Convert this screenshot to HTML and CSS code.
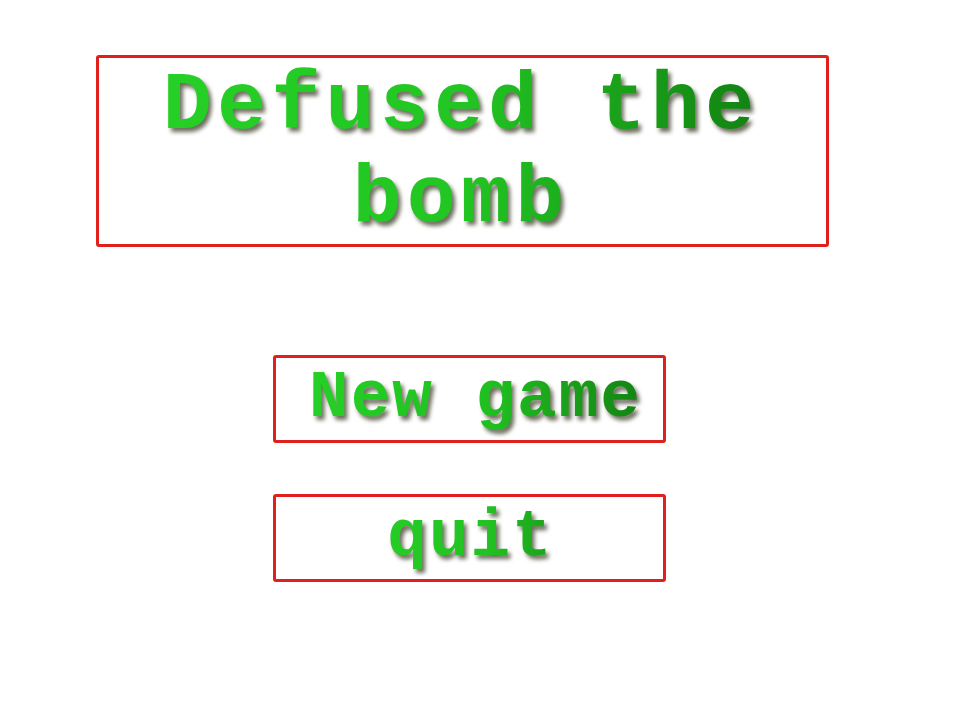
FILE: index.html
```html
<!DOCTYPE html>
<html>
<head>
<meta charset="utf-8">
<link rel="stylesheet" href="styles.css">
</head>
<body>
<div class="screen">
  <div class="title-box">
    <h1 class="title">Defused the<br>bomb</h1>
  </div>
  <div class="menu">
    <div class="btn"><span class="label label-new">New game</span></div>
    <div class="btn"><span class="label label-quit">quit</span></div>
  </div>
</div>
</body>
</html>
```
FILE: styles.css
```css
html, body {
  margin: 0;
  padding: 0;
  background: #ffffff;
}
.screen {
  width: 953px;
  height: 721px;
  padding: 55px 0 0 96px;
  box-sizing: border-box;
  font-family: "Liberation Mono", "Courier New", monospace;
  font-weight: bold;
}
.title-box {
  width: 733px;
  height: 192px;
  box-sizing: border-box;
  border: 3px solid #e0201c;
  border-radius: 3px;
  display: flex;
  justify-content: center;
  align-items: center;
}
.title {
  margin: 0;
  font-size: 82px;
  line-height: 93px;
  letter-spacing: 5px;
  padding-left: 5px;
  text-align: center;
  background: linear-gradient(90deg, #26d026 0%, #22c622 50%, #128212 100%);
  -webkit-background-clip: text;
  background-clip: text;
  color: transparent;
  filter: drop-shadow(3px 4px 2px rgba(60,60,40,0.75));
  transform: translate(-4px, 2px);
}
.menu {
  margin-top: 108px;
  margin-left: 177px;
  display: flex;
  flex-direction: column;
  gap: 51px;
}
.btn {
  width: 393px;
  height: 88px;
  box-sizing: border-box;
  border: 3px solid #e0201c;
  border-radius: 3px;
  display: flex;
  justify-content: center;
  align-items: center;
}
.label {
  font-size: 66px;
  line-height: 80px;
  letter-spacing: 2px;
  padding-left: 2px;
  background: linear-gradient(90deg, #26d026 0%, #1fbf1f 55%, #138313 100%);
  -webkit-background-clip: text;
  background-clip: text;
  color: transparent;
  filter: drop-shadow(3px 4px 2px rgba(60,60,40,0.75));
}
.label-new {
  transform: translateX(5px);
}
.label-quit {
  background: linear-gradient(90deg, #26cc26 0%, #22c222 60%, #1aa21a 100%);
  -webkit-background-clip: text;
  background-clip: text;
}
```
